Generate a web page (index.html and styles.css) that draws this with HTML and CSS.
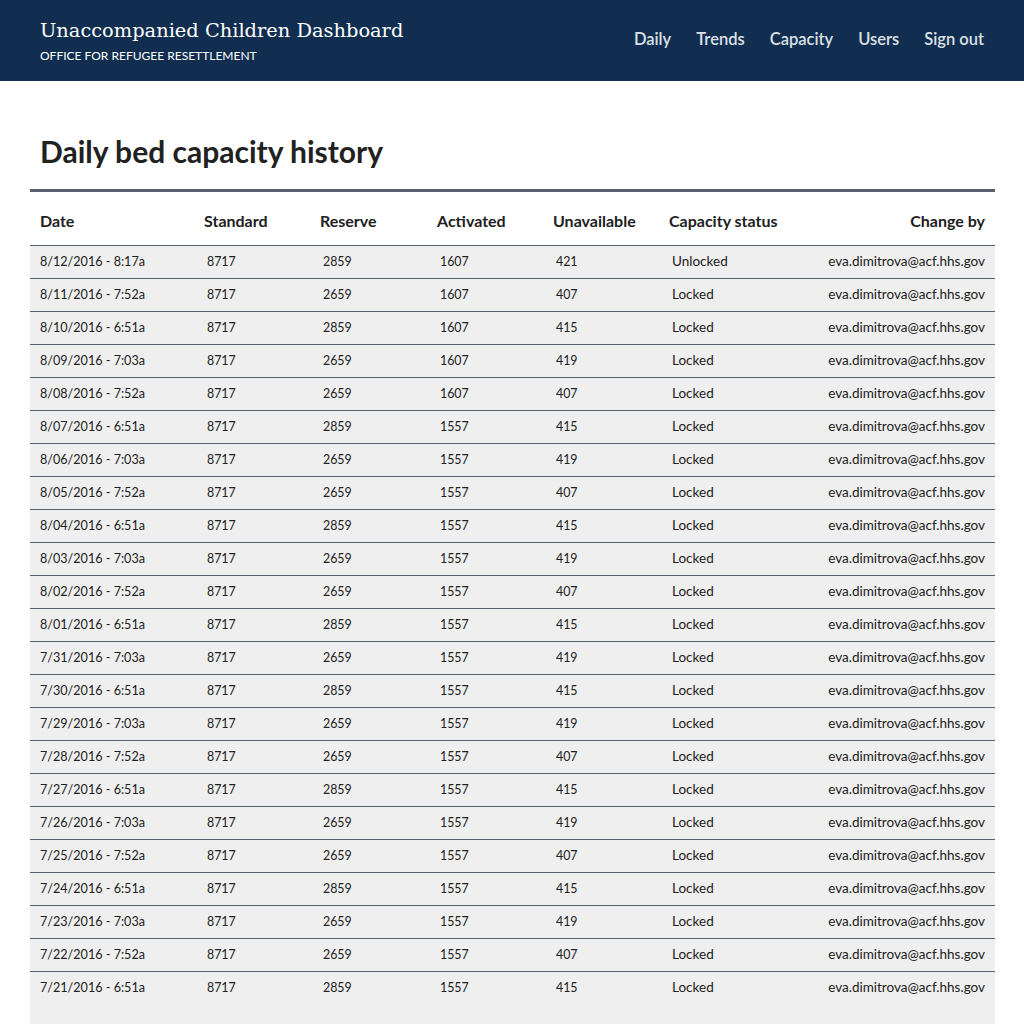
FILE: index.html
```html
<!DOCTYPE html>
<html>
<head>
<meta charset="utf-8">
<link rel="stylesheet" href="styles.css">
</head>
<body>
<header class="site-header">
  <div class="brand">
    <div class="brand-title">Unaccompanied Children Dashboard</div>
    <div class="brand-sub">OFFICE FOR REFUGEE RESETTLEMENT</div>
  </div>
  <nav class="nav">
    <a>Daily</a>
    <a>Trends</a>
    <a>Capacity</a>
    <a>Users</a>
    <a>Sign out</a>
  </nav>
</header>
<main class="main">
  <h1 class="page-title">Daily bed capacity history</h1>
  <table class="history">
    <thead>
      <tr>
        <th class="c-date">Date</th>
        <th class="c-std">Standard</th>
        <th class="c-res">Reserve</th>
        <th class="c-act">Activated</th>
        <th class="c-una">Unavailable</th>
        <th class="c-stat">Capacity status</th>
        <th class="c-by">Change by</th>
      </tr>
    </thead>
    <tbody>
      <tr><td class="dt">8/12/2016 - 8:17a</td><td class="num">8717</td><td class="num">2859</td><td class="num">1607</td><td class="num">421</td><td class="st">Unlocked</td><td class="by">eva.dimitrova@acf.hhs.gov</td></tr>
      <tr><td class="dt">8/11/2016 - 7:52a</td><td class="num">8717</td><td class="num">2659</td><td class="num">1607</td><td class="num">407</td><td class="st">Locked</td><td class="by">eva.dimitrova@acf.hhs.gov</td></tr>
      <tr><td class="dt">8/10/2016 - 6:51a</td><td class="num">8717</td><td class="num">2859</td><td class="num">1607</td><td class="num">415</td><td class="st">Locked</td><td class="by">eva.dimitrova@acf.hhs.gov</td></tr>
      <tr><td class="dt">8/09/2016 - 7:03a</td><td class="num">8717</td><td class="num">2659</td><td class="num">1607</td><td class="num">419</td><td class="st">Locked</td><td class="by">eva.dimitrova@acf.hhs.gov</td></tr>
      <tr><td class="dt">8/08/2016 - 7:52a</td><td class="num">8717</td><td class="num">2659</td><td class="num">1607</td><td class="num">407</td><td class="st">Locked</td><td class="by">eva.dimitrova@acf.hhs.gov</td></tr>
      <tr><td class="dt">8/07/2016 - 6:51a</td><td class="num">8717</td><td class="num">2859</td><td class="num">1557</td><td class="num">415</td><td class="st">Locked</td><td class="by">eva.dimitrova@acf.hhs.gov</td></tr>
      <tr><td class="dt">8/06/2016 - 7:03a</td><td class="num">8717</td><td class="num">2659</td><td class="num">1557</td><td class="num">419</td><td class="st">Locked</td><td class="by">eva.dimitrova@acf.hhs.gov</td></tr>
      <tr><td class="dt">8/05/2016 - 7:52a</td><td class="num">8717</td><td class="num">2659</td><td class="num">1557</td><td class="num">407</td><td class="st">Locked</td><td class="by">eva.dimitrova@acf.hhs.gov</td></tr>
      <tr><td class="dt">8/04/2016 - 6:51a</td><td class="num">8717</td><td class="num">2859</td><td class="num">1557</td><td class="num">415</td><td class="st">Locked</td><td class="by">eva.dimitrova@acf.hhs.gov</td></tr>
      <tr><td class="dt">8/03/2016 - 7:03a</td><td class="num">8717</td><td class="num">2659</td><td class="num">1557</td><td class="num">419</td><td class="st">Locked</td><td class="by">eva.dimitrova@acf.hhs.gov</td></tr>
      <tr><td class="dt">8/02/2016 - 7:52a</td><td class="num">8717</td><td class="num">2659</td><td class="num">1557</td><td class="num">407</td><td class="st">Locked</td><td class="by">eva.dimitrova@acf.hhs.gov</td></tr>
      <tr><td class="dt">8/01/2016 - 6:51a</td><td class="num">8717</td><td class="num">2859</td><td class="num">1557</td><td class="num">415</td><td class="st">Locked</td><td class="by">eva.dimitrova@acf.hhs.gov</td></tr>
      <tr><td class="dt">7/31/2016 - 7:03a</td><td class="num">8717</td><td class="num">2659</td><td class="num">1557</td><td class="num">419</td><td class="st">Locked</td><td class="by">eva.dimitrova@acf.hhs.gov</td></tr>
      <tr><td class="dt">7/30/2016 - 6:51a</td><td class="num">8717</td><td class="num">2859</td><td class="num">1557</td><td class="num">415</td><td class="st">Locked</td><td class="by">eva.dimitrova@acf.hhs.gov</td></tr>
      <tr><td class="dt">7/29/2016 - 7:03a</td><td class="num">8717</td><td class="num">2659</td><td class="num">1557</td><td class="num">419</td><td class="st">Locked</td><td class="by">eva.dimitrova@acf.hhs.gov</td></tr>
      <tr><td class="dt">7/28/2016 - 7:52a</td><td class="num">8717</td><td class="num">2659</td><td class="num">1557</td><td class="num">407</td><td class="st">Locked</td><td class="by">eva.dimitrova@acf.hhs.gov</td></tr>
      <tr><td class="dt">7/27/2016 - 6:51a</td><td class="num">8717</td><td class="num">2859</td><td class="num">1557</td><td class="num">415</td><td class="st">Locked</td><td class="by">eva.dimitrova@acf.hhs.gov</td></tr>
      <tr><td class="dt">7/26/2016 - 7:03a</td><td class="num">8717</td><td class="num">2659</td><td class="num">1557</td><td class="num">419</td><td class="st">Locked</td><td class="by">eva.dimitrova@acf.hhs.gov</td></tr>
      <tr><td class="dt">7/25/2016 - 7:52a</td><td class="num">8717</td><td class="num">2659</td><td class="num">1557</td><td class="num">407</td><td class="st">Locked</td><td class="by">eva.dimitrova@acf.hhs.gov</td></tr>
      <tr><td class="dt">7/24/2016 - 6:51a</td><td class="num">8717</td><td class="num">2859</td><td class="num">1557</td><td class="num">415</td><td class="st">Locked</td><td class="by">eva.dimitrova@acf.hhs.gov</td></tr>
      <tr><td class="dt">7/23/2016 - 7:03a</td><td class="num">8717</td><td class="num">2659</td><td class="num">1557</td><td class="num">419</td><td class="st">Locked</td><td class="by">eva.dimitrova@acf.hhs.gov</td></tr>
      <tr><td class="dt">7/22/2016 - 7:52a</td><td class="num">8717</td><td class="num">2659</td><td class="num">1557</td><td class="num">407</td><td class="st">Locked</td><td class="by">eva.dimitrova@acf.hhs.gov</td></tr>
      <tr class="last"><td class="dt">7/21/2016 - 6:51a</td><td class="num">8717</td><td class="num">2859</td><td class="num">1557</td><td class="num">415</td><td class="st">Locked</td><td class="by">eva.dimitrova@acf.hhs.gov</td></tr>
    </tbody>
  </table>
</main>
</body>
</html>
```
FILE: styles.css
```css
* { box-sizing: border-box; }
html, body { margin: 0; padding: 0; background: #fff; }
body {
  font-family: "Lato", "Noto Sans", sans-serif;
  color: #212121;
}
.site-header {
  height: 81px;
  background: #112e51;
  display: flex;
  justify-content: space-between;
  align-items: flex-start;
  padding: 0 40px;
}
.brand { padding-top: 19px; }
.brand-title {
  font-family: "DejaVu Serif", "Liberation Serif", serif;
  font-size: 19.4px;
  line-height: 24px;
  color: #fff;
}
.brand-sub {
  font-size: 12px;
  line-height: 14px;
  margin-top: 6px;
  color: #fff;
}
.nav {
  display: flex;
  gap: 25px;
  padding-top: 29px;
}
.nav a {
  color: #dce0e6;
  font-size: 16.5px;
  line-height: 20px;
  font-weight: 600;
}
.main { padding: 0 29px 0 30px; }
.page-title {
  margin: 0;
  padding: 51px 10px 0;
  font-size: 30px;
  line-height: 38px;
  font-weight: 700;
  color: #212121;
}
.history {
  margin-top: 19px;
  width: 100%;
  border-collapse: collapse;
  border-top: 3px solid #5b616b;
}
.history th {
  font-size: 16px;
  line-height: 20px;
  font-weight: 700;
  text-align: left;
  height: 55px;
  padding: 19px 0 0 10px;
  vertical-align: top;
  color: #212121;
  border-bottom: 1px solid #5b616b;
}
.history th.c-date { width: 164px; }
.history th.c-std { width: 116px; }
.history th.c-res { width: 117px; }
.history th.c-act { width: 116px; }
.history th.c-una { width: 116px; }
.history th.c-by { text-align: right; padding-right: 10px; }
.history td {
  background: #efefef;
  font-size: 13.5px;
  line-height: 18px;
  height: 33px;
  padding: 6px 0 0 10px;
  vertical-align: top;
  color: #212121;
  border-bottom: 1px solid #5b616b;
}
.history td.dt { font-size: 12.6px; padding-top: 7px; }
.history td.num { padding-left: 13px; font-size: 12.4px; padding-top: 7px; }
.history td.st { padding-left: 13px; }
.history td.by { text-align: right; padding-right: 10px; }
.history tr.last td { border-bottom: none; height: 53px; }
```
